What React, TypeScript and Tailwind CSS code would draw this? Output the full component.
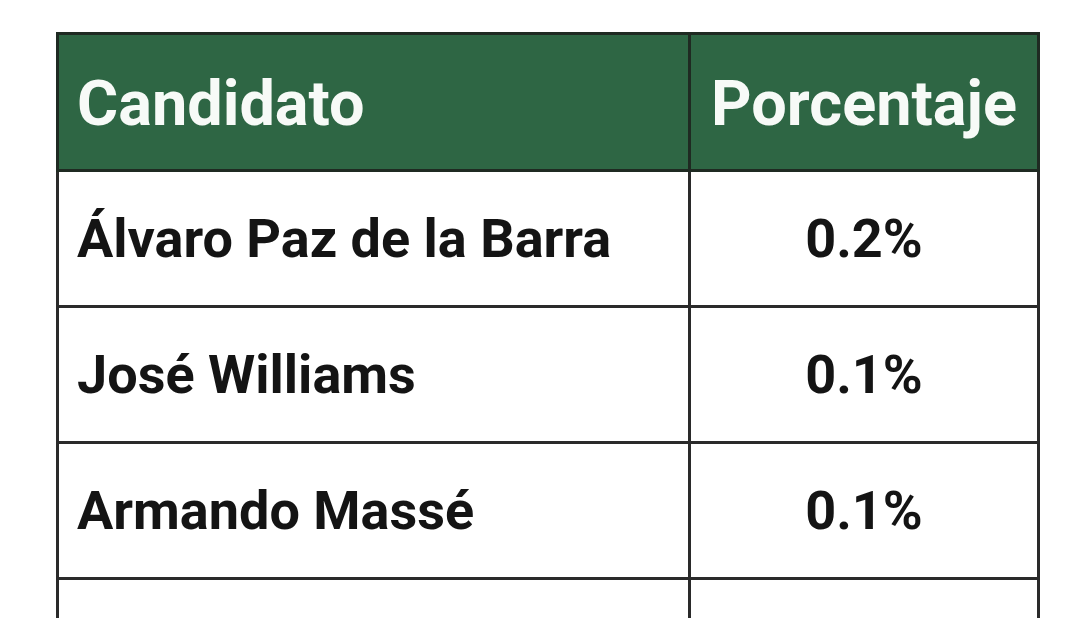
const rows = [
  { name: 'Álvaro Paz de la Barra', pct: '0.2%' },
  { name: 'José Williams', pct: '0.1%' },
  { name: 'Armando Massé', pct: '0.1%' },
];

export default function App() {
  return (
    <div className="min-h-screen bg-white pl-[56px] pt-[32px] font-['Roboto',sans-serif]">
      <table className="w-[984px] table-fixed border-collapse">
        <thead>
          <tr className="h-[137px] bg-[#2e6644] text-[#f7faf7]">
            <th className="w-[632px] border-[3px] border-[#1f2a22] pl-[18px] pt-[4px] text-left text-[63px] font-bold">
              Candidato
            </th>
            <th className="border-[3px] border-[#1f2a22] pt-[4px] text-center text-[63px] font-bold">
              Porcentaje
            </th>
          </tr>
        </thead>
        <tbody className="text-[#141414]">
          {rows.map((row) => (
            <tr key={row.name} className="h-[136px]">
              <td className="border-[3px] border-[#2a2a2a] pl-[18px] text-[54px] font-bold">{row.name}</td>
              <td className="border-[3px] border-[#2a2a2a] text-center text-[54px] font-bold">{row.pct}</td>
            </tr>
          ))}
          <tr className="h-[136px]">
            <td className="border-[3px] border-[#2a2a2a]" />
            <td className="border-[3px] border-[#2a2a2a]" />
          </tr>
        </tbody>
      </table>
    </div>
  );
}
